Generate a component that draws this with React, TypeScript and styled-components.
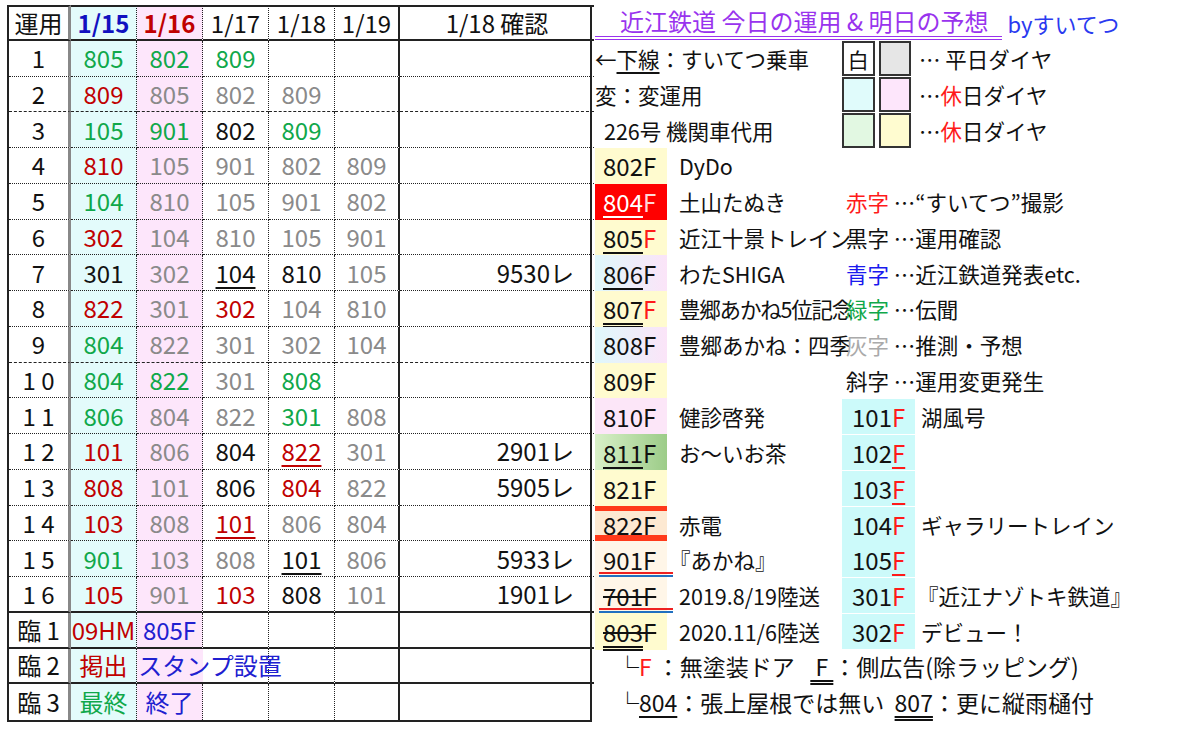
import React from "react";
import styled, { createGlobalStyle, css } from "styled-components";

const Global = createGlobalStyle`
  html, body { margin: 0; padding: 0; background: #fff; }
  body { font-family: "Noto Sans CJK JP", "Noto Sans", sans-serif; color: #111; }
`;

const RH = 35.75;
const C = { g: "#10a84a", r: "#c00000", k: "#111", a: "#8a8a8a", b: "#2020d0", R: "#ff1a1a" };

const Page = styled.div`
  display: flex;
  padding: 5px 0 0 7px;
  width: 1200px;
  height: 730px;
  box-sizing: border-box;
  overflow: hidden;
`;

const Table = styled.div`
  display: grid;
  grid-template-columns: 62px 66px 66px 66px 66px 65px 194px;
  grid-auto-rows: ${RH}px;
  border: 2px solid #222;
  border-top: none;
  width: 585px;
  box-sizing: border-box;
  align-self: flex-start;
`;

type Line = "dot" | "dash" | "solid" | "gray" | "none";
const lineCss = (l: Line) =>
  l === "dot" ? "1.5px dotted #222" : l === "dash" ? "1.5px dashed #222" : l === "solid" ? "2px solid #222" : l === "gray" ? "3px solid #888" : "none";

const Cell = styled.div<{ $bg?: string; $c?: string; $b: Line; $r: Line; $t?: Line; $align?: string; $span?: number }>`
  box-sizing: border-box;
  display: flex;
  align-items: center;
  justify-content: ${(p) => p.$align || "center"};
  padding: 0 ${(p) => (p.$align === "flex-end" ? "20px" : "0")} 0 0;
  font-size: 24px;
  line-height: 1;
  white-space: nowrap;
  background: ${(p) => p.$bg || "transparent"};
  color: ${(p) => p.$c || "#111"};
  border-bottom: ${(p) => lineCss(p.$b)};
  border-right: ${(p) => lineCss(p.$r)};
  border-top: ${(p) => (p.$t ? lineCss(p.$t) : "none")};
  ${(p) => p.$span && css`grid-column: span ${p.$span};`}
`;

const U = styled.span<{ $uc?: string; $dbl?: boolean }>`
  text-decoration: underline ${(p) => (p.$dbl ? "double" : "solid")};
  text-decoration-color: ${(p) => p.$uc || "#111"};
  text-decoration-thickness: 2px;
  text-underline-offset: 4px;
`;

type D = [string, string, string?];
const rows: D[][] = [
  [["805", "g"], ["802", "g"], ["809", "g"]],
  [["809", "r"], ["805", "a"], ["802", "a"], ["809", "a"]],
  [["105", "g"], ["901", "g"], ["802", "k"], ["809", "g"]],
  [["810", "r"], ["105", "a"], ["901", "a"], ["802", "a"], ["809", "a"]],
  [["104", "g"], ["810", "a"], ["105", "a"], ["901", "a"], ["802", "a"]],
  [["302", "r"], ["104", "a"], ["810", "a"], ["105", "a"], ["901", "a"]],
  [["301", "k"], ["302", "a"], ["104", "k", "u"], ["810", "k"], ["105", "a"]],
  [["822", "r"], ["301", "a"], ["302", "r"], ["104", "a"], ["810", "a"]],
  [["804", "g"], ["822", "a"], ["301", "a"], ["302", "a"], ["104", "a"]],
  [["804", "g"], ["822", "g"], ["301", "a"], ["808", "g"]],
  [["806", "g"], ["804", "a"], ["822", "a"], ["301", "g"], ["808", "a"]],
  [["101", "r"], ["806", "a"], ["804", "k"], ["822", "r", "u"], ["301", "a"]],
  [["808", "r"], ["101", "a"], ["806", "k"], ["804", "r"], ["822", "a"]],
  [["103", "r"], ["808", "a"], ["101", "r", "u"], ["806", "a"], ["804", "a"]],
  [["901", "g"], ["103", "a"], ["808", "a"], ["101", "k", "u"], ["806", "a"]],
  [["105", "r"], ["901", "a"], ["103", "r"], ["808", "k"], ["101", "a"]],
];
const conf: Record<number, string> = { 6: "9530レ", 11: "2901レ", 12: "5905レ", 14: "5933レ", 15: "1901レ" };
const labels = ["1", "2", "3", "4", "5", "6", "7", "8", "9", "1 0", "1 1", "1 2", "1 3", "1 4", "1 5", "1 6"];
const BG = ["#e3fbfb", "#fde6fb"];

const Right = styled.div`
  display: flex;
  flex-direction: column;
  width: 608px;
`;
const Title = styled.div`
  height: ${RH}px;
  display: flex;
  align-items: center;
  padding-left: 3px;
  white-space: nowrap;
`;
const TitleMain = styled.span`
  color: #9933ee;
  font-size: 24px;
  padding: 0 14px 0 25px;
  border-bottom: 4px double #9933ee;
  line-height: 30px;
`;
const By = styled.span`
  color: #2a3af0;
  font-size: 22px;
  margin-left: 5px;
`;
const RRow = styled.div`
  display: grid;
  grid-template-columns: 72px 175px 73px 1fr;
  height: ${RH}px;
  padding-left: 3px;
  font-size: 21.5px;
  white-space: nowrap;
`;
const Num = styled.div<{ $bg?: string; $c?: string; $strike?: boolean }>`
  background: ${(p) => p.$bg || "transparent"};
  color: ${(p) => p.$c || "#111"};
  display: flex;
  align-items: center;
  padding-left: 8px;
  font-size: 24px;
  position: relative;
  ${(p) => p.$strike && css`text-decoration: line-through; text-decoration-thickness: 2px;`}
`;
const NumR = styled(Num)`
  padding-left: 10px;
  margin: 1px 0;
`;
const Txt = styled.div<{ $span?: number }>`
  display: flex;
  align-items: center;
  padding-left: 12px;
  ${(p) => p.$span && css`grid-column: span ${p.$span};`}
`;
const Key = styled.div`
  display: flex;
  align-items: center;
  padding-left: 0;
`;
const Sw = styled.div<{ $bg: string }>`
  width: 34px;
  height: 35px;
  box-sizing: border-box;
  border: 2px solid #333;
  background: ${(p) => p.$bg};
  margin-right: 4px;
  display: flex;
  align-items: center;
  justify-content: center;
  font-size: 21px;
`;
const Red = styled.span`color: ${C.R};`;
const Col = styled.span<{ $c: string }>`color: ${(p) => p.$c};`;
const Note = styled.div`
  height: ${RH}px;
  display: flex;
  align-items: center;
  padding-left: 24px;
  font-size: 23px;
  white-space: nowrap;
`;
const Bar = styled.div<{ $top?: boolean; $h: number }>`
  position: absolute;
  left: 0;
  right: 0;
  height: ${(p) => p.$h}px;
  background: #ff3a1a;
  ${(p) => (p.$top ? "top: 0;" : "bottom: 0;")}
`;
const DUl = styled.div`
  position: absolute;
  left: 4px;
  right: -6px;
  bottom: 1px;
  height: 5px;
  border-top: 2px solid #ee2020;
  border-bottom: 2px solid #2070c0;
  box-sizing: border-box;
`;

export default function App() {
  const head = ["運用", "1/15", "1/16", "1/17", "1/18", "1/19", "1/18 確認"];
  const headC = ["#111", "#1010c0", "#c00000", "#111", "#111", "#111", "#111"];
  const cells: React.ReactNode[] = [];
  head.forEach((h, i) =>
    cells.push(
      <Cell key={"h" + i} $t="solid" $b="solid" $r={i === 0 ? "gray" : i === 5 ? "solid" : i === 6 ? "none" : "dot"} $bg={BG[i - 1]} $c={headC[i]} style={i === 1 || i === 2 ? { fontWeight: 700 } : undefined}>
        {h}
      </Cell>
    )
  );
  rows.forEach((r, ri) => {
    const b: Line = ri === 15 ? "solid" : ri === 1 || ri === 8 ? "dash" : "dot";
    cells.push(<Cell key={`l${ri}`} $b={b} $r="gray">{labels[ri]}</Cell>);
    for (let ci = 0; ci < 5; ci++) {
      const d = r[ci];
      const col = d ? C[d[1] as keyof typeof C] : undefined;
      cells.push(
        <Cell key={`c${ri}-${ci}`} $b={b} $r={ci === 4 ? "solid" : "dot"} $bg={BG[ci]} $c={col}>
          {d ? d[2] ? <U $uc={col}>{d[0]}</U> : d[0] : null}
        </Cell>
      );
    }
    cells.push(<Cell key={`f${ri}`} $b={b} $r="none" $align="flex-end">{conf[ri] || ""}</Cell>);
  });
  const extra: [string, React.ReactNode, React.ReactNode][] = [
    ["臨 1", <Col $c={C.r}>09HM</Col>, <Col $c={C.b}>805F</Col>],
    ["臨 2", <Col $c={C.r}>掲出</Col>, <Col $c={C.b} style={{ position: "relative", left: 40 }}>スタンプ設置</Col>],
    ["臨 3", <Col $c={C.g}>最終</Col>, <Col $c={C.b}>終了</Col>],
  ];
  extra.forEach(([l, a, bb], i) => {
    const b: Line = i === 2 ? "none" : "solid";
    cells.push(<Cell key={`x${i}`} $b={b} $r="gray">{l}</Cell>);
    cells.push(<Cell key={`xa${i}`} $b={b} $r="dot" $bg={BG[0]}>{a}</Cell>);
    cells.push(<Cell key={`xb${i}`} $b={b} $r={i === 1 ? "none" : "dot"} $bg={BG[1]}>{bb}</Cell>);
    for (let k = 2; k < 5; k++) cells.push(<Cell key={`xc${i}${k}`} $b={b} $r={k === 4 ? "solid" : "dot"} />);
    cells.push(<Cell key={`xd${i}`} $b={b} $r="none" />);
  });

  const yel = "#fffbcf";
  const cp = "linear-gradient(90deg,#dff8fb,#fbe4f8)";
  const cy = "#ccfafa";
  return (
    <Page>
      <Global />
      <Table>{cells}</Table>
      <Right>
        <Title>
          <TitleMain>近江鉄道 今日の運用 &amp; 明日の予想</TitleMain>
          <By>byすいてつ</By>
        </Title>
        <RRow>
          <Txt $span={2} style={{ paddingLeft: 0 }}>←<U>下線</U>：すいてつ乗車</Txt>
          <Key><Sw $bg="#fff">白</Sw><Sw $bg="#e6e6e6" /></Key>
          <Txt style={{ paddingLeft: 4 }}>… 平日ダイヤ</Txt>
        </RRow>
        <RRow>
          <Txt $span={2} style={{ paddingLeft: 0 }}>変：変運用</Txt>
          <Key><Sw $bg="#e0fbfb" /><Sw $bg="#fde6fb" /></Key>
          <Txt style={{ paddingLeft: 4 }}>… <Red>休</Red>日ダイヤ</Txt>
        </RRow>
        <RRow>
          <Txt $span={2} style={{ paddingLeft: 9 }}>226号 機関車代用</Txt>
          <Key><Sw $bg="#e2f8e2" /><Sw $bg="#fffcd0" /></Key>
          <Txt style={{ paddingLeft: 4 }}>… <Red>休</Red>日ダイヤ</Txt>
        </RRow>
        <RRow>
          <Num $bg={yel}>802F</Num><Txt>DyDo</Txt>
        </RRow>
        <RRow>
          <Num $bg="#ff0000" $c="#fff"><U $uc="#fff">804</U><span style={{ color: "#ffd8d8" }}>F</span></Num>
          <Txt>土山たぬき</Txt>
          <Txt $span={2} style={{ paddingLeft: 4 }}><Red>赤字</Red>&nbsp;…“すいてつ”撮影</Txt>
        </RRow>
        <RRow>
          <Num $bg={yel}><U>805</U><Red>F</Red></Num><Txt>近江十景トレイン</Txt>
          <Txt $span={2} style={{ paddingLeft: 4 }}>黒字 …運用確認</Txt>
        </RRow>
        <RRow>
          <Num $bg={cp}><U>806</U>F</Num><Txt>わたSHIGA</Txt>
          <Txt $span={2} style={{ paddingLeft: 4 }}><Col $c="#1a1aee">青字</Col>&nbsp;…近江鉄道発表etc.</Txt>
        </RRow>
        <RRow>
          <Num $bg={yel}><U $dbl>807</U><Red>F</Red></Num><Txt style={{ letterSpacing: -1.2 }}>豊郷あかね5位記念</Txt>
          <Txt $span={2} style={{ paddingLeft: 4 }}><Col $c={C.g}>緑字</Col>&nbsp;…伝聞</Txt>
        </RRow>
        <RRow>
          <Num $bg={cp}>808F</Num><Txt>豊郷あかね：四季</Txt>
          <Txt $span={2} style={{ paddingLeft: 4 }}><Col $c="#aaa">灰字</Col>&nbsp;…推測・予想</Txt>
        </RRow>
        <RRow>
          <Num $bg={yel}>809F</Num><Txt />
          <Txt $span={2} style={{ paddingLeft: 4 }}>斜字 …運用変更発生</Txt>
        </RRow>
        <RRow>
          <Num $bg="#fce6f8">810F</Num><Txt>健診啓発</Txt>
          <NumR $bg={cy}>101<Red>F</Red></NumR><Txt style={{ paddingLeft: 6 }}>湖風号</Txt>
        </RRow>
        <RRow>
          <Num $bg="linear-gradient(90deg,#d8f0c8,#9ccc88)"><U $dbl>811</U>F</Num><Txt>お～いお茶</Txt>
          <NumR $bg={cy}>102<U $uc={C.R}><Red>F</Red></U></NumR>
        </RRow>
        <RRow>
          <Num $bg={yel}>821F</Num><Txt />
          <NumR $bg={cy}>103<U $uc={C.R}><Red>F</Red></U></NumR>
        </RRow>
        <RRow>
          <Num $bg="#fde9d2"><Bar $top $h={5} /><Bar $h={8} />822F</Num><Txt>赤電</Txt>
          <NumR $bg={cy}>104<Red>F</Red></NumR><Txt style={{ paddingLeft: 6 }}>ギャラリートレイン</Txt>
        </RRow>
        <RRow>
          <Num $bg="#fff6e8">901F<DUl /></Num><Txt style={{ paddingLeft: 2 }}>『あかね』</Txt>
          <NumR $bg={cy}>105<U $uc={C.R}><Red>F</Red></U></NumR>
        </RRow>
        <RRow>
          <Num $bg="#fff6e8" $strike>701F<DUl /></Num><Txt>2019.8/19陸送</Txt>
          <NumR $bg={cy}>301<Red>F</Red></NumR><Txt style={{ paddingLeft: 2 }}>『近江ナゾトキ鉄道』</Txt>
        </RRow>
        <RRow>
          <Num $bg={yel} $strike><U $dbl>803</U>F</Num><Txt>2020.11/6陸送</Txt>
          <NumR $bg={cy}>302<Red>F</Red></NumR><Txt style={{ paddingLeft: 6 }}>デビュー！</Txt>
        </RRow>
        <Note>└ <Red>F</Red>&nbsp;：無塗装ドア&nbsp;&nbsp;&nbsp;<U $dbl>&nbsp;F&nbsp;</U>：側広告(除ラッピング)</Note>
        <Note>└<U>804</U>：張上屋根では無い&nbsp;&nbsp;<U $dbl>807</U>：更に縦雨樋付</Note>
      </Right>
    </Page>
  );
}
